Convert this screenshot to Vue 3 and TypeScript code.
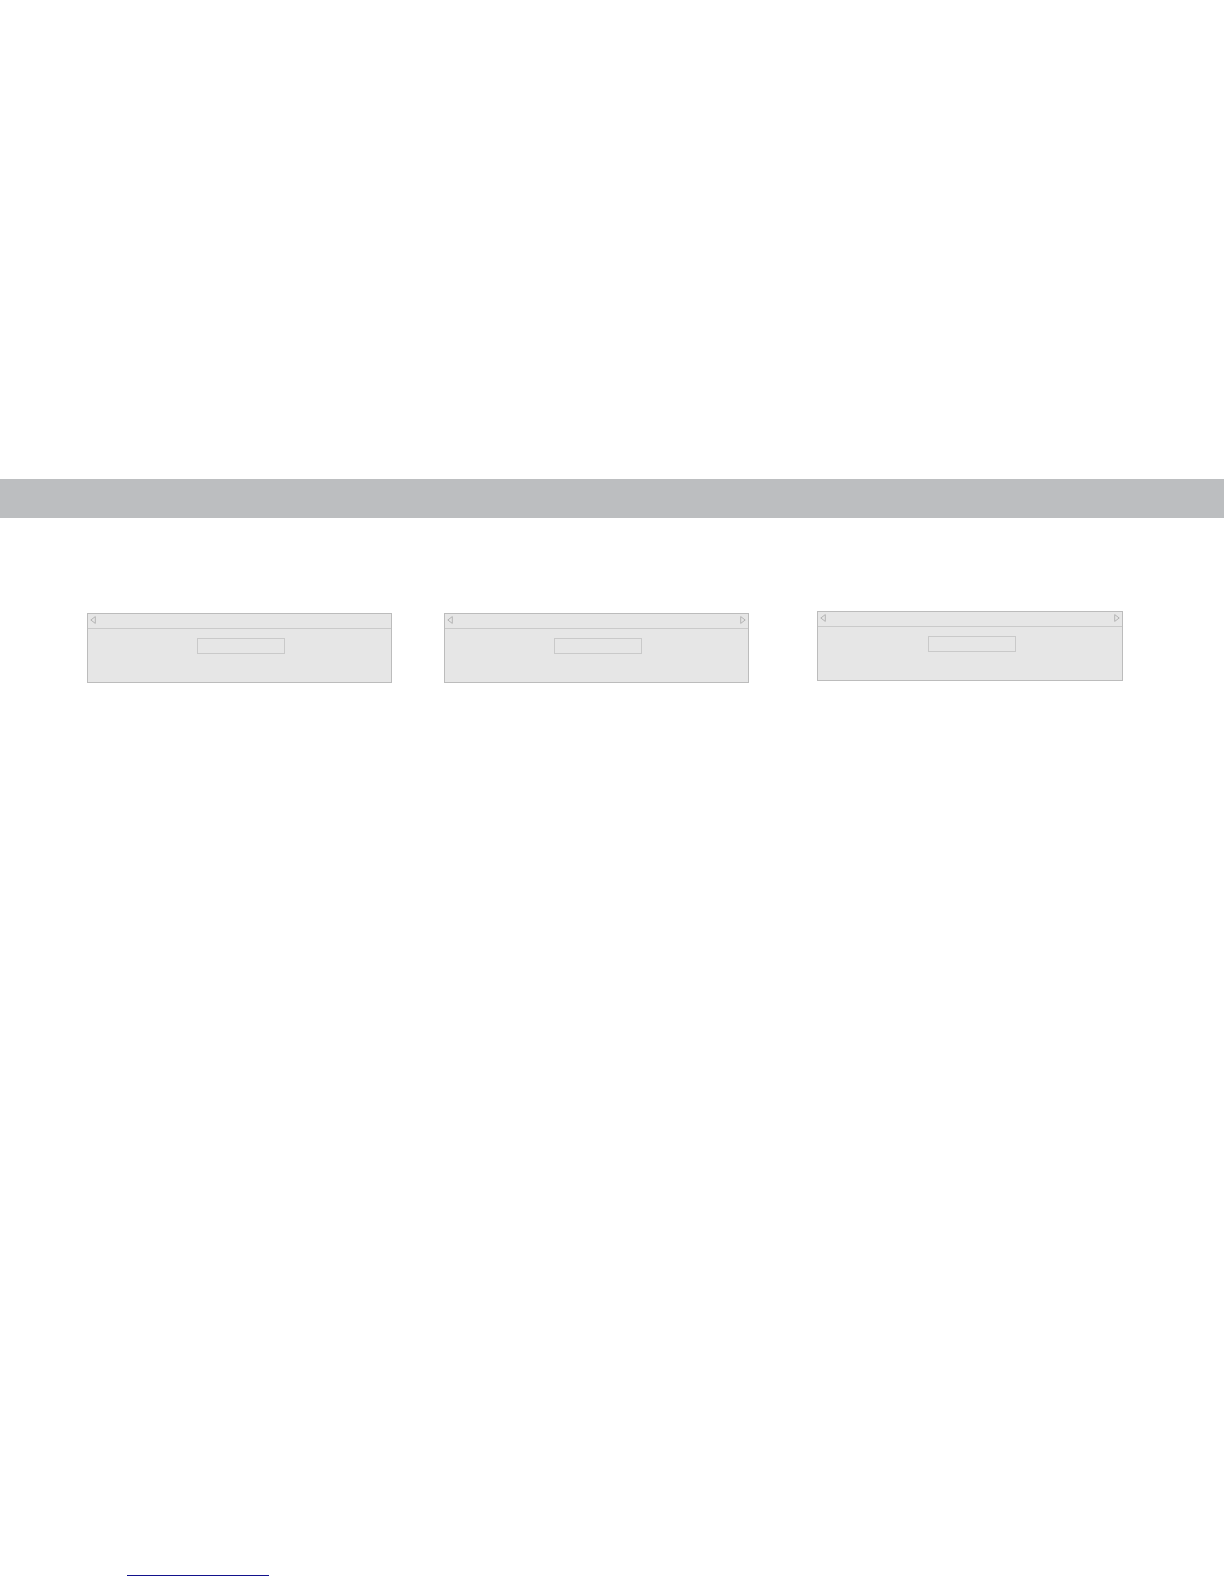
<script setup lang="ts">
interface Panel {
  id: number
  next: boolean
  raised: boolean
}

const panels: Panel[] = [
  { id: 1, next: false, raised: false },
  { id: 2, next: true, raised: false },
  { id: 3, next: true, raised: true },
]
</script>

<template>
  <div class="page">
    <header class="band"></header>
    <main class="panels">
      <section v-for="panel in panels" :key="panel.id" class="panel" :class="{ raised: panel.raised }">
        <div class="bar">
          <button class="arrow" type="button" aria-label="Previous">
            <svg viewBox="0 0 6 8" width="6" height="8"><path d="M5.3 .6v6.8L.8 4z" /></svg>
          </button>
          <button v-if="panel.next" class="arrow" type="button" aria-label="Next">
            <svg viewBox="0 0 6 8" width="6" height="8"><path d="M.7 .6v6.8L5.2 4z" /></svg>
          </button>
        </div>
        <div class="body">
          <input class="field" type="text" aria-label="Value" />
        </div>
      </section>
    </main>
    <footer class="footer">
      <a class="link" href="#" aria-label="Link"></a>
    </footer>
  </div>
</template>

<style>
body {
  margin: 0;
  background: #fff;
}
</style>

<style scoped>
.page {
  box-sizing: border-box;
  display: flex;
  flex-direction: column;
  min-height: 100vh;
  padding-top: 479px;
  font-family: "Liberation Sans", Arial, sans-serif;
}

.band {
  height: 39px;
  background: #bcbec0;
}

.panels {
  display: grid;
  grid-template-columns: 87fr 305fr 52fr 305fr 68fr 306fr 101fr;
  align-items: start;
  padding-top: 93px;
}

.panel {
  box-sizing: border-box;
  height: 70px;
  margin-top: 2px;
  border: 1px solid #bcbcbc;
  background: #e6e6e6;
}

.panel:nth-child(1) {
  grid-column: 2;
}

.panel:nth-child(2) {
  grid-column: 4;
}

.panel:nth-child(3) {
  grid-column: 6;
}

.panel.raised {
  margin-top: 0;
}

.bar {
  box-sizing: border-box;
  display: flex;
  justify-content: space-between;
  height: 15px;
  padding: 2px 2px 0;
  border-bottom: 1px solid #cacaca;
}

.arrow {
  display: block;
  height: 8px;
  padding: 0;
  border: 0;
  background: none;
}

.arrow svg {
  display: block;
  overflow: visible;
  fill: none;
  stroke: #b4b4b4;
  stroke-width: 1;
}

.body {
  display: flex;
  justify-content: center;
  padding: 9px 0 0 3px;
}

.field {
  box-sizing: border-box;
  width: 88px;
  height: 16px;
  padding: 0 2px;
  border: 1px solid #c9c9c9;
  background: transparent;
  font: inherit;
  font-size: 10px;
}

.footer {
  margin-top: auto;
  padding: 0 127px 8px;
}

.link {
  display: block;
  width: 142px;
  height: 12px;
  border-bottom: 1px solid #12128c;
}
</style>
